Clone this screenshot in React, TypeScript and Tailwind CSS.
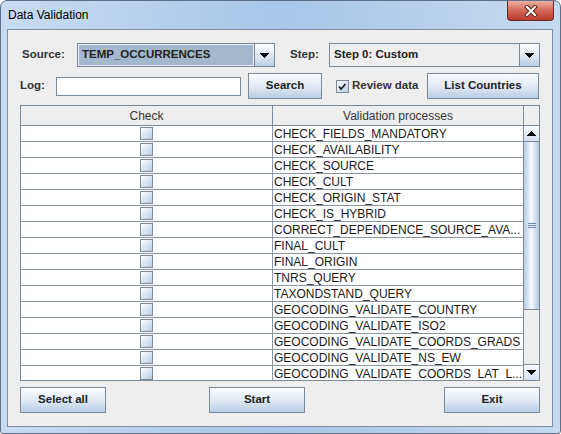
import { ReactNode } from 'react'

const rows = [
    'CHECK_FIELDS_MANDATORY',
    'CHECK_AVAILABILITY',
    'CHECK_SOURCE',
    'CHECK_CULT',
    'CHECK_ORIGIN_STAT',
    'CHECK_IS_HYBRID',
    'CORRECT_DEPENDENCE_SOURCE_AVA...',
    'FINAL_CULT',
    'FINAL_ORIGIN',
    'TNRS_QUERY',
    'TAXONDSTAND_QUERY',
    'GEOCODING_VALIDATE_COUNTRY',
    'GEOCODING_VALIDATE_ISO2',
    'GEOCODING_VALIDATE_COORDS_GRADS',
    'GEOCODING_VALIDATE_NS_EW',
    'GEOCODING_VALIDATE_COORDS_LAT_L...',
]

const Arrow = ({ up }: { up?: boolean }) => (
    <svg width="9" height="5" viewBox="0 0 9 5" shapeRendering="crispEdges">
        <path d={up ? 'M0 5L4.5 0L9 5Z' : 'M0 0H9L4.5 5Z'} fill="#000" />
    </svg>
)

const Box = ({ checked }: { checked?: boolean }) => (
    <span className="w-[13px] h-[13px] border border-[#7a8a99] bg-gradient-to-br from-[#ffffff] to-[#b9cde3] flex items-center justify-center">
        {checked && (
            <svg width="11" height="11" viewBox="0 0 11 11">
                <path d="M2 5.5L4 8L8.5 3" fill="none" stroke="#222" strokeWidth="1.8" />
            </svg>
        )}
    </span>
)

const Button = ({ children, className }: { children: ReactNode, className: string }) => (
    <div className={`h-[26px] border border-[#7a8a99] bg-gradient-to-b from-[#fbfcfe] via-[#e2eaf4] to-[#b9cee5]
    flex items-center justify-center font-bold text-[11.5px] text-[#222] ${className}`}>
        {children}
    </div>
)

const Combo = ({ text, focused, className }: { text: string, focused?: boolean, className: string }) => (
    <div className={`h-[24px] border border-[#7a8a99] flex bg-[#eeeeee] ${className}`}>
        <div className="flex-1 p-[1px] flex">
            <div className={`flex-1 flex items-center pl-[3px] font-bold text-[11.5px] text-[#222] ${focused ? 'bg-[#a3b8cc]' : ''}`}>
                {text}
            </div>
        </div>
        <div className="w-[20px] border-l border-[#7a8a99] bg-gradient-to-b from-[#fbfcfe] via-[#e2eaf4] to-[#b9cee5] flex items-center justify-center">
            <Arrow />
        </div>
    </div>
)

const App = () => {
    return (
        <div className="w-[561px] h-[434px] flex flex-col rounded-t-[7px] rounded-b-[3px] border border-[#5f7189]
        bg-gradient-to-r from-[#c7dcf2] via-[#a8c7e9] to-[#c5daef] overflow-hidden font-['Liberation_Sans',Arial,sans-serif]">
            {/* title bar */}
            <div className="h-[28px] flex items-start">
                <span className="pl-[7px] pt-[6px] text-[12px] leading-[16px] text-black">Data Validation</span>
                <div className="ml-auto mr-[6px] w-[47px] h-[20px] rounded-b-[4px] border border-t-0 border-[#6b2b22]
                bg-gradient-to-b from-[#eab0a2] via-[#d2685a] to-[#b9392a] flex items-center justify-center">
                    <svg width="14" height="12" viewBox="0 0 14 12">
                        <path d="M3 2L11 10M11 2L3 10" stroke="#5a1d14" strokeWidth="4" strokeLinecap="square" />
                        <path d="M3 2L11 10M11 2L3 10" stroke="#fff" strokeWidth="2.2" strokeLinecap="square" />
                    </svg>
                </div>
            </div>

            {/* client area */}
            <div className="ml-[6px] w-[546px] h-[398px] border border-[#7d8ea5] bg-[#eeeeee] flex flex-col">
                <div className="mt-[13px] h-[24px] pl-[14px] flex items-center">
                    <span className="w-[55px] font-bold text-[11.5px] text-[#333]">Source:</span>
                    <Combo text="TEMP_OCCURRENCES" focused className="w-[198px]" />
                    <span className="ml-[15px] w-[39px] font-bold text-[11.5px] text-[#333]">Step:</span>
                    <Combo text="Step 0: Custom" className="w-[211px]" />
                </div>

                <div className="mt-[6px] h-[26px] pl-[12px] flex items-center">
                    <span className="w-[36px] font-bold text-[11.5px] text-[#333]">Log:</span>
                    <div className="w-[185px] h-[19px] border border-[#7a8a99] bg-white"></div>
                    <Button className="ml-[7px] w-[74px]">Search</Button>
                    <div className="ml-[14px] w-[91px] flex items-center gap-[3px]">
                        <Box checked />
                        <span className="font-bold text-[11.5px] text-[#333]">Review data</span>
                    </div>
                    <Button className="w-[112px]">List Countries</Button>
                </div>

                {/* table */}
                <div className="mt-[6px] ml-[12px] w-[520px] h-[276px] border border-[#7a8a99] flex flex-col bg-[#eeeeee]">
                    <div className="h-[20px] flex border-b border-[#7a8a99] text-[12px] text-[#333]">
                        <div className="w-[252px] border-r border-[#7a8a99] flex items-center justify-center">Check</div>
                        <div className="w-[250px] flex items-center justify-center">Validation processes</div>
                        <div className="w-[16px] border-l border-[#7a8a99]"></div>
                    </div>
                    <div className="h-[254px] flex">
                        <div className="w-[502px] overflow-hidden bg-white">
                            {rows.map((r) => (
                                <div key={r} className="h-[16px] flex border-b border-[#8a98a6]">
                                    <div className="w-[252px] border-r border-[#8a98a6] flex items-center justify-center">
                                        <Box />
                                    </div>
                                    <div className="w-[250px] pl-[1px] flex items-center text-[12px] text-[#1a1a1a] whitespace-nowrap overflow-hidden">
                                        {r}
                                    </div>
                                </div>
                            ))}
                        </div>
                        <div className="w-[16px] border-l border-[#7a8a99] flex flex-col bg-[#eeeeee]">
                            <div className="h-[16px] border-b border-[#7a8a99] bg-gradient-to-b from-[#fbfcfe] to-[#d3e0ee] flex items-center justify-center">
                                <Arrow up />
                            </div>
                            <div className="h-[168px] border-b border-[#7a8a99] bg-gradient-to-r from-[#b6cbe4] via-[#f6f9fc] to-[#afc7e1] flex flex-col items-center justify-center gap-[1px]">
                                <span className="w-[8px] h-[1px] bg-[#6f8bb0]"></span>
                                <span className="w-[8px] h-[1px] bg-[#6f8bb0]"></span>
                                <span className="w-[8px] h-[1px] bg-[#6f8bb0]"></span>
                            </div>
                            <div className="flex-1"></div>
                            <div className="h-[16px] border-t border-[#7a8a99] bg-gradient-to-b from-[#fbfcfe] to-[#d3e0ee] flex items-center justify-center">
                                <Arrow />
                            </div>
                        </div>
                    </div>
                </div>

                <div className="mt-[6px] px-[12px] flex">
                    <Button className="w-[86px]">Select all</Button>
                    <Button className="ml-[103px] w-[96px]">Start</Button>
                    <Button className="ml-auto w-[96px]">Exit</Button>
                </div>
            </div>
        </div>
    )
}

export default App
